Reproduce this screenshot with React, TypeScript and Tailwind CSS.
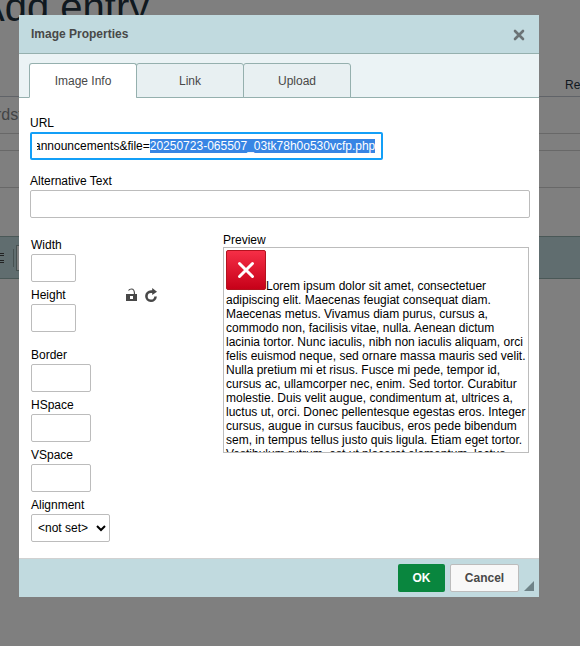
import { useEffect, useRef } from "react";
import type { ReactNode } from "react";

const FILE_URL = "announcements&file=20250723-065507_03tk78h0o530vcfp.php";

const LOREM =
  "Lorem ipsum dolor sit amet, consectetuer adipiscing elit. Maecenas feugiat consequat diam. Maecenas metus. Vivamus diam purus, cursus a, commodo non, facilisis vitae, nulla. Aenean dictum lacinia tortor. Nunc iaculis, nibh non iaculis aliquam, orci felis euismod neque, sed ornare massa mauris sed velit. Nulla pretium mi et risus. Fusce mi pede, tempor id, cursus ac, ullamcorper nec, enim. Sed tortor. Curabitur molestie. Duis velit augue, condimentum at, ultrices a, luctus ut, orci. Donec pellentesque egestas eros. Integer cursus, augue in cursus faucibus, eros pede bibendum sem, in tempus tellus justo quis ligula. Etiam eget tortor. Vestibulum rutrum, est ut placerat elementum, lectus";

const inputBase =
  "block h-7 rounded-[2px] border border-[#bcbcbc] bg-white px-1.5 text-xs text-black outline-none";

function Field({ id, label, children }: { id: string; label: string; children: ReactNode }) {
  return (
    <div>
      <label htmlFor={id} className="block text-xs leading-[18px]">
        {label}
      </label>
      {children}
    </div>
  );
}

function Backdrop() {
  return (
    <div aria-hidden="true" className="h-full overflow-hidden bg-white text-[#1f3240]">
      <div className="-mt-4 -ml-[22px] h-[92px] text-[40px] leading-[46px] whitespace-nowrap">Add entry</div>
      <div className="flex h-[21px] justify-end border-b border-[#c0c6d0]">
        <span className="w-[15px] overflow-hidden text-xs leading-[18px] whitespace-nowrap">Required</span>
      </div>
      <div className="h-[37px] overflow-hidden border-b border-[#d0d0d0] text-base leading-[36px] text-[#85898c]">
        <span className="-ml-1">rdst</span>
      </div>
      <div className="h-[17px] border-b border-[#d0d0d0]" />
      <div className="h-[37px] border-b border-[#d0d0d0]" />
      <div className="mt-12 flex h-[43px] items-center gap-2 border-y border-[#95b0ae] bg-[#c1dadf]">
        <svg width="5" height="12" className="shrink-0" stroke="#444" strokeWidth="1">
          <path d="M0 1.5h4M0 3.5h4M0 8.5h4M0 10.5h4" />
        </svg>
        <span className="h-[18px] w-px bg-[#8fa3a3]" />
        <span className="-ml-1.5 h-[26px] w-20 border border-[#8fa3a3] bg-white" />
      </div>
    </div>
  );
}

function Tab({ label, active }: { label: string; active?: boolean }) {
  return (
    <button
      type="button"
      role="tab"
      aria-selected={!!active}
      className={
        "relative -mr-px h-[35px] w-[108px] rounded-t-[3px] border border-[#95b0ae] text-xs text-[#484848] " +
        (active ? "border-b-white bg-white" : "bg-[#e8f0f2]")
      }
    >
      {label}
    </button>
  );
}

function LockIcon() {
  return (
    <svg width="12" height="14" viewBox="0 0 12 14" fill="none">
      <path fill="#484848" fillRule="evenodd" d="M0 6h11v7H0zM4 8v3h3V8z" />
      <path d="M2.500 2.500Q3.500 1 5.500 1Q8.500 1 8.500 6" stroke="#484848" strokeWidth="1.200" />
    </svg>
  );
}

function ResetIcon() {
  return (
    <svg width="13" height="15" viewBox="0 0 13 15" fill="none">
      <path d="M8 3.600H6A4.600 4.600 0 1 0 10.600 8.500" stroke="#484848" strokeWidth="2.600" />
      <path d="M7.200 0L12 3.800L7.200 7z" fill="#484848" />
    </svg>
  );
}

function ErrorImage() {
  return (
    <svg width="40" height="40" viewBox="0 0 40 40" className="inline align-baseline">
      <defs>
        <linearGradient id="red" x1="0" y1="0" x2="0" y2="1">
          <stop offset="0" stopColor="#f62f47" />
          <stop offset="1" stopColor="#c60018" />
        </linearGradient>
      </defs>
      <rect x="0.5" y="0.5" width="39" height="39" rx="1.500" fill="url(#red)" stroke="#b3121f" />
      <path d="M13.500 13.500L26.500 26.500M26.500 13.500L13.500 26.500" stroke="#fff" strokeWidth="3" strokeLinecap="round" />
    </svg>
  );
}

export default function App() {
  const url = useRef<HTMLInputElement>(null);

  useEffect(() => {
    const el = url.current;
    if (!el) return;
    el.focus();
    el.setSelectionRange(FILE_URL.indexOf("=") + 1, FILE_URL.length);
    el.scrollLeft = el.scrollWidth;
  }, []);

  return (
    <div className="relative h-screen overflow-hidden font-['Liberation_Sans',Arial,sans-serif]">
      <Backdrop />
      <div className="absolute inset-0 bg-black/50 pt-[15px] pr-[41px] pl-[19px]">
        <div role="dialog" aria-labelledby="title" className="relative w-full bg-white text-black">
          <header className="flex h-[39px] items-center justify-between border-b border-[#95b0ae] bg-[#c1dadf] pr-3.5 pl-3">
            <h1 id="title" className="text-xs font-bold text-[#484848]">
              Image Properties
            </h1>
            <button type="button" aria-label="Close" className="mt-0.5">
              <svg width="12" height="12" viewBox="0 0 12 12" stroke="#6b7375" strokeWidth="2.600" strokeLinecap="round">
                <path d="M2 2L10 10M10 2L2 10" />
              </svg>
            </button>
          </header>

          <div className="bg-[#ebf3f5] pt-[9px]">
            <div role="tablist" className="flex h-[35px] border-b border-[#95b0ae] pl-2.5">
              <Tab label="Image Info" active />
              <Tab label="Link" />
              <Tab label="Upload" />
            </div>
          </div>

          <main className="pt-4 pr-[9px] pb-4 pl-[11px]">
            <div className="flex flex-col gap-3">
              <Field id="url" label="URL">
                <input
                  ref={url}
                  id="url"
                  type="text"
                  defaultValue={FILE_URL}
                  className="block h-7 w-[353px] max-w-full rounded-[2px] border-2 border-[#139ff7] bg-white pr-1.5 pl-[5px] text-xs text-black outline-none selection:bg-[#3584e4fd] selection:text-white"
                />
              </Field>
              <Field id="alt" label="Alternative Text">
                <input id="alt" type="text" className={inputBase + " w-full"} />
              </Field>
            </div>

            <div className="mt-[15px] flex pr-px pl-px">
              <div className="w-48 shrink-0 pt-[3px]">
                <div className="flex items-center">
                  <div className="flex flex-col gap-1">
                    <Field id="width" label="Width">
                      <input id="width" type="text" className={inputBase + " w-[45px]"} />
                    </Field>
                    <Field id="height" label="Height">
                      <input id="height" type="text" className={inputBase + " w-[45px]"} />
                    </Field>
                  </div>
                  <div className="mt-[22px] ml-[50px] flex items-center gap-[7px]">
                    <button type="button" aria-label="Lock Ratio">
                      <LockIcon />
                    </button>
                    <button type="button" aria-label="Reset Size">
                      <ResetIcon />
                    </button>
                  </div>
                </div>
                <div className="mt-3.5 flex flex-col gap-1">
                  <Field id="border" label="Border">
                    <input id="border" type="text" className={inputBase + " w-[60px]"} />
                  </Field>
                  <Field id="hspace" label="HSpace">
                    <input id="hspace" type="text" className={inputBase + " w-[60px]"} />
                  </Field>
                  <Field id="vspace" label="VSpace">
                    <input id="vspace" type="text" className={inputBase + " w-[60px]"} />
                  </Field>
                  <Field id="align" label="Alignment">
                    <select
                      id="align"
                      className="block h-7 w-[79px] rounded-[2px] border border-[#bcbcbc] bg-white px-0.5 text-xs text-black outline-none"
                    >
                      <option>&lt;not set&gt;</option>
                      <option>Left</option>
                      <option>Right</option>
                    </select>
                  </Field>
                </div>
              </div>

              <section className="min-w-0 flex-1 text-xs leading-[14px]">
                <h2>Preview</h2>
                <div className="h-[206px] overflow-hidden border border-[#bcbcbc] p-0.5">
                  <ErrorImage />
                  {LOREM}
                </div>
              </section>
            </div>
          </main>

          <footer className="flex h-[39px] items-center justify-end gap-[5px] border-t border-[#d1d1d1] bg-[#c1dadf] pr-5">
            <button type="button" className="h-7 w-[47px] rounded-[2px] bg-[#09863e] text-xs font-bold text-white">
              OK
            </button>
            <button
              type="button"
              className="h-7 w-[69px] rounded-[2px] border border-[#bcbcbc] bg-[#f8f8f8] text-xs font-bold text-[#484848]"
            >
              Cancel
            </button>
            <svg width="10" height="10" className="absolute right-[5px] bottom-1.5" fill="#6f8388">
              <path d="M10 0V10H0z" />
            </svg>
          </footer>
        </div>
      </div>
    </div>
  );
}
